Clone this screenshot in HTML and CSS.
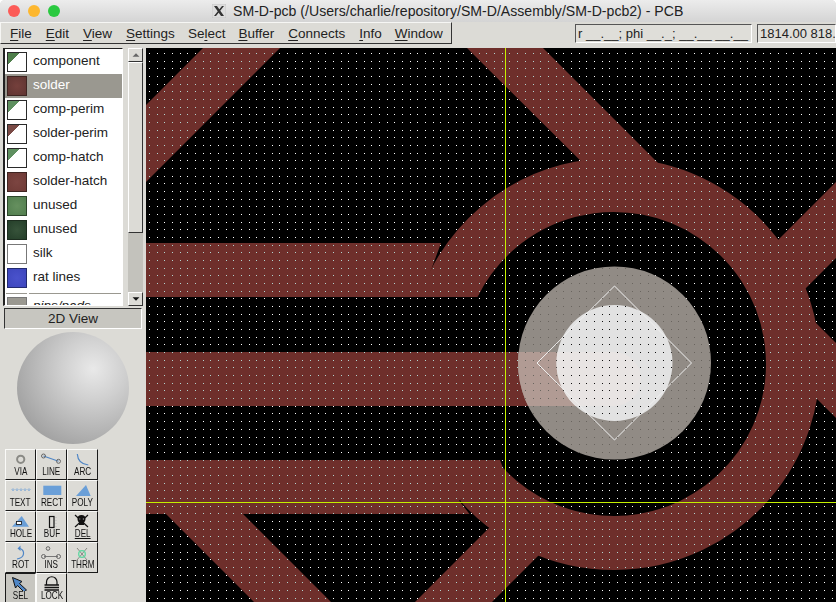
FILE: index.html
```html
<!DOCTYPE html>
<html lang="en">
<head>
<meta charset="utf-8">
<title>SM-D-pcb - PCB</title>
<link rel="stylesheet" href="styles.css">
</head>
<body>
<div class="window">
  <header class="titlebar">
    <div class="lights"><i class="light red"></i><i class="light amber"></i><i class="light green"></i></div>
    <div class="title">
      <svg class="xicon" viewBox="0 0 14 14" width="14" height="14"><rect class="xbg" width="14" height="14" rx="1"/><path class="xglyph" d="M2 2h3l7 10H9zM10 2h2L4 12H2z"/></svg>
      <span>SM-D-pcb (/Users/charlie/repository/SM-D/Assembly/SM-D-pcb2) - PCB</span>
    </div>
  </header>
  <div class="toolbar">
    <nav class="menu">
      <span><u>F</u>ile</span><span><u>E</u>dit</span><span><u>V</u>iew</span><span><u>S</u>ettings</span><span>Se<u>l</u>ect</span><span><u>B</u>uffer</span><span><u>C</u>onnects</span><span><u>I</u>nfo</span><span><u>W</u>indow</span>
    </nav>
    <div class="status">
      <div class="field rel">r __.__; phi __._; __.__ __.__</div>
      <div class="field pos">1814.00 818.</div>
    </div>
  </div>
  <div class="main">
    <aside class="sidebar">
      <div class="layers">
        <ul class="layer-list">
          <li><i class="swatch tri-green"></i>component</li>
          <li class="selected"><i class="swatch solder"></i>solder</li>
          <li><i class="swatch tri-lgreen"></i>comp-perim</li>
          <li><i class="swatch tri-brown"></i>solder-perim</li>
          <li><i class="swatch tri-lgreen"></i>comp-hatch</li>
          <li><i class="swatch shatch"></i>solder-hatch</li>
          <li><i class="swatch unused1"></i>unused</li>
          <li><i class="swatch unused2"></i>unused</li>
          <li><i class="swatch silk"></i>silk</li>
          <li><i class="swatch rat"></i>rat lines</li>
          <li class="sep"><b></b><b></b></li>
          <li class="pins"><i class="swatch pinsw"></i>pins/pads</li>
        </ul>
        <div class="scrollbar">
          <div class="sb-btn"><svg viewBox="0 0 14 14" width="12" height="12"><path class="sb-up" d="M3 9h8L7 5z"/></svg></div>
          <div class="sb-thumb"></div>
          <div class="sb-trough"></div>
          <div class="sb-btn"><svg viewBox="0 0 14 14" width="12" height="12"><path class="sb-down" d="M3 5h8L7 9z"/></svg></div>
        </div>
      </div>
      <div class="view-btn">2D View</div>
      <div class="sphere"></div>
      <div class="tools">
        <div class="tool"><svg class="ti" viewBox="1 1 29 17"><circle class="i-gray" cx="15.7" cy="10.3" r="3.6"/></svg><span>VIA</span></div>
        <div class="tool"><svg class="ti" viewBox="1 1 29 17"><path class="i-blue" d="M7.5 7L22.5 12.3"/><circle class="i-thin" cx="7.5" cy="7" r="2"/><circle class="i-thin" cx="22.5" cy="12.3" r="2"/></svg><span>LINE</span></div>
        <div class="tool"><svg class="ti" viewBox="1 1 29 17"><path class="i-blue" d="M10.3 5Q11 15 21.3 16"/></svg><span>ARC</span></div>
        <div class="tool"><svg class="ti" viewBox="1 1 29 17"><path class="i-blue-fine" d="M7 9.7l1-1 1 1-1 1zM11 9.7l1-1 1 1-1 1zM15 9.7l1-1 1 1-1 1zM19 9.7l1-1 1 1-1 1zM23 9.7l1-1 1 1-1 1z"/></svg><span>TEXT</span></div>
        <div class="tool"><svg class="ti" viewBox="1 1 29 17"><rect class="i-fill" x="7.3" y="5.7" width="18" height="9.3"/></svg><span>RECT</span></div>
        <div class="tool"><svg class="ti" viewBox="1 1 29 17"><path class="i-fill" d="M9 16H23.7L19 5z"/></svg><span>POLY</span></div>
        <div class="tool"><svg class="ti" viewBox="1 1 29 17"><path class="i-fill" d="M7 15.7H24L16.7 5z"/><rect class="i-hole" x="11.5" y="10.5" width="5" height="3"/></svg><span>HOLE</span></div>
        <div class="tool"><svg class="ti" viewBox="1 1 29 17"><rect class="i-black" x="13.5" y="5.5" width="4.5" height="11"/><path class="i-faint" d="M20 6v1M20 9v1M20 12v1M20 15v1"/></svg><span>BUF</span></div>
        <div class="tool"><svg class="ti" viewBox="1 1 29 17"><path class="i-black" d="M8 4l13 12M21 4L8 16"/><path class="i-solid" d="M10.5 8a4 4 0 0 1 8 0c0 2-1 3-1.500 3.500V14h-5v-2.500C11.500 11 10.500 10 10.500 8z"/><rect class="i-hole" x="12" y="7" width="1.500" height="2"/><rect class="i-hole" x="15.500" y="7" width="1.500" height="2"/></svg><span class="under">DEL</span></div>
        <div class="tool"><svg class="ti" viewBox="1 1 29 17"><path class="i-blue" d="M15 6.500Q19 8 18.500 12T12 17"/><path class="i-bluefill" d="M12.500 6.500L15.500 3.500V9z"/></svg><span>ROT</span></div>
        <div class="tool"><svg class="ti" viewBox="1 1 29 17"><path class="i-blue-dim" d="M8 14.500H22"/><circle class="i-thin" cx="12" cy="6.500" r="1.800"/><circle class="i-thin" cx="7.500" cy="14.500" r="2"/><circle class="i-thin" cx="22.500" cy="14.500" r="2"/></svg><span>INS</span></div>
        <div class="tool"><svg class="ti" viewBox="1 1 29 17"><path class="i-xline" d="M10 6L20 18M20 6L10 18"/><circle class="i-green" cx="15" cy="12" r="3.300"/></svg><span>THRM</span></div>
        <div class="tool active"><svg class="ti" viewBox="1 1 29 17"><path class="i-arrow" d="M7.500 4.500L17 8.500L14.500 10.500L21.500 17L19 19L12.500 12.500L10.500 15z"/></svg><span>SEL</span></div>
        <div class="tool"><svg class="ti" viewBox="1 1 29 17"><path class="i-black" d="M10.500 12V9a5 5 0 0 1 10.500 0v3"/><path class="i-stripes" d="M8.500 12h14.500M8.500 14.500h14.500M8.500 17h14.500"/></svg><span>LOCK</span></div>
      </div>
    </aside>
    <svg class="board" viewBox="146 48 690 554" width="690" height="554">
      <defs>
        <g id="copper">
          <path d="M203 48H280L146 182V105z"/>
          <path d="M467 48H543L675 180H600z"/>
          <path d="M146 243H441L430.500 271.500L460 265L478 297H146z"/>
          <path d="M146 460H500L503 468L490 490L459 500.500L469.500 514H146z"/>
          <path d="M166 514H243L331 602H254z"/>
          <path d="M490 527L415 602H492L560 534z"/>
          <path d="M836 182L778 240L775 243L800 295L806 288L836 258z"/>
          <path d="M815 322L836 343V418L817 399L790 360z"/>
          <path d="M146 352H614A27 27 0 0 1 614 406H146z"/>
          <path class="ring" d="M453.800 284.100A179 179 0 1 1 480.200 482.900"/>
        </g>
        <mask id="copperMask" maskUnits="userSpaceOnUse" x="146" y="48" width="690" height="554">
          <use href="#copper" class="mask-white"/>
        </mask>
        <clipPath id="padClip"><circle cx="614.500" cy="363" r="96.500"/></clipPath>
        <clipPath id="holeClip"><circle cx="614.500" cy="363" r="58"/></clipPath>
      </defs>
      <rect class="bg" x="146" y="48" width="690" height="554"/>
      <use href="#copper" class="copper"/>
      <circle class="pad" cx="614.500" cy="363" r="96.500"/>
      <path class="pad-trace" clip-path="url(#padClip)" d="M146 352H614A27 27 0 0 1 614 406H146z"/>
      <circle class="hole" cx="614.500" cy="363" r="58"/>
      <path class="hole-trace" clip-path="url(#holeClip)" d="M146 352H614A27 27 0 0 1 614 406H146z"/>
      <path class="diamond" d="M537 363L614.500 286L691.500 363L614.500 440z"/>
      <path class="dots dots-base"/>
      <path class="dots dots-copper" mask="url(#copperMask)"/>
      <path class="dots dots-pad" clip-path="url(#padClip)"/>
      <path class="dots dots-hole" clip-path="url(#holeClip)"/>
      <path class="cross" d="M505.500 48V602M146 502.500H836"/>
    </svg>
  </div>
</div>
<script src="grid.js"></script>
</body>
</html>
```
FILE: styles.css
```css
* { box-sizing: border-box; }
html, body { margin: 0; padding: 0; background: #fff; }
body { font-family: "Liberation Sans", Arial, sans-serif; color: #111; }
.window { width: 836px; height: 602px; overflow: hidden; display: flex; flex-direction: column; background: #dcdbd6; border-radius: 5px 5px 0 0; }

.titlebar { height: 22px; flex: none; display: flex; align-items: center; position: relative; background: linear-gradient(#ececec, #d4d4d4); }
.lights { display: flex; gap: 8px; margin-left: 8px; }
.light { width: 12px; height: 12px; border-radius: 50%; display: block; }
.red { background: #fc5b57; }
.amber { background: #fdb72f; }
.green { background: #2ac940; }
.title { margin-left: 152px; display: flex; align-items: center; gap: 7px; font-size: 14.100px; color: #222; white-space: nowrap; }
.xicon { display: block; }
.xbg { fill: #dddddd; stroke: #b5b5b5; stroke-width: .5; }
.xglyph { fill: #333; }

.toolbar { height: 26px; flex: none; display: flex; justify-content: space-between; }
.menu { height: 22px; width: 452px; display: flex; align-items: center; font-size: 13.500px; background: #dcdbd6; border: 1px solid; border-color: #f6f6f4 #333 #333 #f6f6f4; padding-left: 9px; }
.menu span { margin-right: 14px; color: #222; }
.menu span:nth-child(4), .menu span:nth-child(5), .menu span:nth-child(8) { margin-right: 13px; }
.menu u { text-underline-offset: 2px; }
.status { display: flex; gap: 5px; padding-top: 2px; width: 261px; }
.field { height: 19px; background: #dfded9; border: 1px solid; border-color: #555 #fff #fff #555; font-size: 13px; line-height: 17px; padding-left: 2px; white-space: nowrap; overflow: hidden; color: #222; }
.rel { width: 177px; }
.pos { width: 79px; }

.main { flex: 1; display: flex; min-height: 0; }
.sidebar { width: 146px; flex: none; background: #dcdbd6; overflow: hidden; }
.layers { display: flex; margin-left: 3px; height: 258px; gap: 5px; }
.layer-list { list-style: none; margin: 0; padding: 1px 0 0 0; width: 120px; height: 258px; background: #fff; overflow: hidden; border: 1px solid; border-width: 1px 1px 1px 2px; border-color: #222 #fff #fff #222; font-size: 13.500px; color: #222; }
.layer-list li { height: 24px; display: flex; align-items: center; padding: 0 0 4px 2px; gap: 6px; }
.layer-list li.selected { background: #9a9890; color: #fff; }
.swatch { width: 20px; height: 20px; display: block; flex: none; margin-top: 4px; border: 1px solid #2a2a2a; background: #fff; }
.tri-green { background: linear-gradient(135deg, #4f7f4b 31%, #fff 31%); }
.tri-lgreen { background: linear-gradient(135deg, #5f9060 31%, #fff 31%); }
.tri-brown { background: linear-gradient(135deg, #7a4a45 31%, #fff 31%); }
.solder { background: radial-gradient(circle, #75403c, #5f3431); border-color: #3f2522; }
.shatch { background: radial-gradient(circle, #7c4541, #6f3a36); border-color: #3f2522; }
.unused1 { background: radial-gradient(circle, #66905f, #517e4e); border-color: #2c452a; }
.unused2 { background: radial-gradient(circle, #37533a, #243e29); border-color: #1c2c1e; }
.silk { border-color: #777; }
.rat { background: radial-gradient(circle, #4a52cc, #3d46bd); border-color: #222a70; }
.pinsw { background: #9a9890; border-color: #777; }
.layer-list li.sep { height: 3px; gap: 2px; padding: 0 1px 0 1px; margin-top: 2px; }
.sep b { display: block; height: 1px; background: #9a9890; }
.sep b:first-child { width: 21px; }
.sep b:last-child { flex: 1; }
.layer-list li.pins { font-style: italic; }
.scrollbar { width: 15px; display: flex; flex-direction: column; }
.sb-btn { height: 14px; flex: none; background: #dcdbd6; display: flex; align-items: center; justify-content: center; border: 1px solid; border-color: #fff #333 #333 #fff; }
.sb-up { fill: #666; }
.sb-down { fill: #111; }
.sb-thumb { height: 171px; flex: none; background: #dcdbd6; border: 1px solid; border-color: #fff #333 #333 #fff; }
.sb-trough { flex: 1; background: #c3c2bc; }
.view-btn { margin: 2px 4px 0 4px; height: 21px; background: #c7c6c0; border: 1px solid; border-color: #333 #fff #fff #333; font-size: 13.500px; line-height: 19px; text-align: center; color: #222; }
.sphere { width: 112px; height: 112px; margin: 3px 0 0 17px; border-radius: 50%; background: radial-gradient(circle at 68% 33%, #e9e9e9 0, #cfcfcf 30%, #ababab 68%, #8d8d8d 100%); }
.tools { display: grid; grid-template-columns: repeat(3, 31px); grid-auto-rows: 31px; margin: 5px 0 0 5px; width: 93px; }
.tool { border: 1px solid; border-color: #fafaf8 #1a1a1a #1a1a1a #fafaf8; background: #dcdbd6; display: flex; flex-direction: column; align-items: center; overflow: hidden; }
.tool.active { background: #c7c6c0; border-color: #1a1a1a #fafaf8 #fafaf8 #1a1a1a; }
.tool span { display: inline-block; font-size: 11px; line-height: 11px; height: 11px; margin-top: -1px; color: #111; white-space: nowrap; transform: scaleX(.74); }
.tool span.under { text-decoration: underline; }
.ti { width: 29px; height: 17px; display: block; flex: none; }
.i-gray { fill: none; stroke: #8a8a85; stroke-width: 2; }
.i-blue { fill: none; stroke: #4f86c6; stroke-width: 1.200; }
.i-blue-dim { fill: none; stroke: #777; stroke-width: 1; }
.i-blue-fine { fill: none; stroke: #5a94d6; stroke-width: .8; }
.i-bluefill { fill: #4f86c6; }
.i-thin { fill: none; stroke: #666; stroke-width: 1; }
.i-fill { fill: #6a9fd8; }
.i-hole { fill: #fff; stroke: #111; stroke-width: .8; }
.i-black { fill: none; stroke: #111; stroke-width: 1.200; }
.i-solid { fill: #111; }
.i-faint { fill: none; stroke: #bbb; stroke-width: 1; }
.i-xline { fill: none; stroke: #8a8a85; stroke-width: 1; }
.i-green { fill: none; stroke: #5fd6a0; stroke-width: 1.300; }
.i-arrow { fill: #4f86c6; stroke: #111; stroke-width: 1; }
.i-stripes { fill: none; stroke: #111; stroke-width: 1.500; }

.board { display: block; flex: none; }
.bg { fill: #000; }
.copper { fill: #6e2f2b; stroke: none; color: #6e2f2b; }
.mask-white { fill: #fff; color: #fff; }
.ring { fill: none; stroke: currentColor; stroke-width: 54; }
.pad { fill: #918b85; }
.pad-trace { fill: #b19b94; }
.hole { fill: #e2e2e2; }
.hole-trace { fill: #e8e4e3; }
.diamond { fill: none; stroke: #f0f0f0; stroke-width: 1; }
.dots { shape-rendering: crispEdges; }
.dots-base { fill: #fff; }
.dots-copper { fill: #b4d4d0; }
.dots-pad { fill: #6a655f; }
.dots-hole { fill: #111; }
.cross { fill: none; stroke: #c4f000; stroke-width: 1; shape-rendering: crispEdges; }
```
FILE: grid.js
```js
(function () {
  var step = 7.67, d = "";
  for (var j = 0; j < 73; j++) {
    for (var i = 0; i < 90; i++) {
      var x = Math.round(149 + i * step), y = Math.round(53 + j * step);
      d += "M" + x + " " + y + "h1v1h-1z";
    }
  }
  document.querySelectorAll(".dots").forEach(function (p) { p.setAttribute("d", d); });
})();
```
